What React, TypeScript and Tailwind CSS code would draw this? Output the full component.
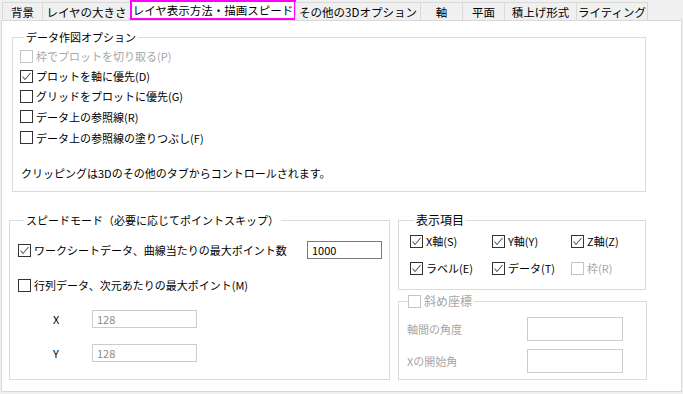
import React from 'react';

const tabs = [
  { id: 1, title: '背景', w: 'w-[41px]' },
  { id: 2, title: 'レイヤの大きさ', w: 'w-[89px]' },
  { id: 3, title: 'レイヤ表示方法・描画スピード', w: 'w-[166px]', active: true },
  { id: 4, title: 'その他の3Dオプション', w: 'w-[126px]' },
  { id: 5, title: '軸', w: 'w-[43px]' },
  { id: 6, title: '平面', w: 'w-[43px]' },
  { id: 7, title: '積上げ形式', w: 'w-[73px]' },
  { id: 8, title: 'ライティング', w: 'w-[72px]' },
];

const Check = ({ checked = false, disabled = false }: { checked?: boolean; disabled?: boolean }) => (
  <span
    className={`flex h-[13px] w-[13px] shrink-0 items-center justify-center border bg-white ${
      disabled ? 'border-[#c4c4c4]' : 'border-[#333333]'
    }`}
  >
    {checked && (
      <svg width="11" height="11" viewBox="0 0 11 11">
        <polyline points="1.5,5.5 4,8.5 9.5,2" fill="none" stroke="#5a5a5a" strokeWidth="1.1" />
      </svg>
    )}
  </span>
);

const CheckRow = ({
  label,
  checked,
  disabled,
  h = 'h-[20px]',
}: {
  label: string;
  checked?: boolean;
  disabled?: boolean;
  h?: string;
}) => (
  <div className={`flex items-center gap-[3px] whitespace-nowrap ${h}`}>
    <Check checked={checked} disabled={disabled} />
    <span className={disabled ? 'text-[#a6a6a6]' : 'text-black'}>{label}</span>
  </div>
);

const App = () => {
  return (
    <div className="h-[394px] w-[683px] overflow-hidden bg-[#f0f0f0] font-['Noto_Sans_CJK_JP',sans-serif] text-[11px] leading-[14px] text-black">
      {/* Tabs */}
      <div className="flex h-[20px] items-end pl-[2px]">
        {tabs.map((tab) =>
          tab.active ? (
            <div
              key={tab.id}
              className={`${tab.w} -ml-px flex h-[20px] items-center justify-center whitespace-nowrap border-2 border-[#ff00ff] bg-white text-[11.5px]`}
            >
              {tab.title}
            </div>
          ) : (
            <div
              key={tab.id}
              className={`${tab.w} -ml-px flex h-[18px] items-center justify-center whitespace-nowrap border-t border-r border-l border-[#d9d9d9] bg-[#f0f0f0] text-[11.5px] first:ml-0`}
            >
              {tab.title}
            </div>
          )
        )}
      </div>

      {/* Panel */}
      <div className="ml-px h-[372px] w-[681px] border border-[#d9d9d9] bg-white">
        {/* データ作図オプション */}
        <fieldset className="ml-[10px] mt-[9px] h-[162px] w-[634px] border border-[#dcdcdc] pl-[7px]">
          <legend className="ml-[4px] px-[2px]">データ作図オプション</legend>
          <div className="mt-[2px] flex flex-col">
            <CheckRow label="枠でプロットを切り取る(P)" disabled />
            <CheckRow label="プロットを軸に優先(D)" checked />
            <CheckRow label="グリッドをプロットに優先(G)" />
            <CheckRow label="データ上の参照線(R)" h="h-[21px]" />
            <CheckRow label="データ上の参照線の塗りつぶし(F)" h="h-[21px]" />
            <div className="mt-[18px] pl-px">クリッピングは3Dのその他のタブからコントロールされます。</div>
          </div>
        </fieldset>

        <div className="mt-[21px] flex">
          {/* スピードモード */}
          <fieldset className="ml-[7px] h-[167px] w-[381px] border border-[#dcdcdc] pl-[8px] pr-[7px]">
            <legend className="ml-[6px] px-[2px]">スピードモード（必要に応じてポイントスキップ）</legend>
            <div className="mt-[13px] flex h-[20px] items-center justify-between">
              <CheckRow label="ワークシートデータ、曲線当たりの最大ポイント数" checked />
              <div className="flex h-[18px] w-[75px] items-center border border-[#7a7a7a] px-[4px]">1000</div>
            </div>
            <div className="mt-[15px]">
              <CheckRow label="行列データ、次元あたりの最大ポイント(M)" />
            </div>
            <div className="mt-[15px] flex h-[18px] items-center pl-[35px]">
              <span className="w-[39px]">X</span>
              <div className="flex h-[18px] w-[105px] items-center border border-[#cccccc] px-[4px] text-[#8c8c8c]">128</div>
            </div>
            <div className="mt-[16px] flex h-[18px] items-center pl-[35px]">
              <span className="w-[39px]">Y</span>
              <div className="flex h-[18px] w-[105px] items-center border border-[#cccccc] px-[4px] text-[#8c8c8c]">128</div>
            </div>
          </fieldset>

          <div className="ml-[8px] flex flex-col">
            {/* 表示項目 */}
            <fieldset className="h-[77px] w-[248px] border border-[#dcdcdc] pl-[11px]">
              <legend className="ml-[4px] px-[2px] text-[12px]">表示項目</legend>
              <div className="mt-[4px] grid grid-cols-[82px_79px_70px] gap-y-[7px]">
                <CheckRow label="X軸(S)" checked />
                <CheckRow label="Y軸(Y)" checked />
                <CheckRow label="Z軸(Z)" checked />
                <CheckRow label="ラベル(E)" checked />
                <CheckRow label="データ(T)" checked />
                <CheckRow label="枠(R)" disabled />
              </div>
            </fieldset>

            {/* 斜め座標 */}
            <fieldset className="mt-[4px] h-[86px] w-[249px] border border-[#dcdcdc] pl-[8px]">
              <legend className="ml-[1px] flex items-center gap-[3px] pr-[2px] text-[#a6a6a6]">
                <Check disabled />
                <span className="text-[12px]">斜め座標</span>
              </legend>
              <div className="mt-[9px] flex h-[24px] items-center text-[#a6a6a6]">
                <span className="w-[120px]">軸間の角度</span>
                <div className="h-[24px] w-[96px] border border-[#cccccc]" />
              </div>
              <div className="mt-[8px] flex h-[24px] items-center text-[#a6a6a6]">
                <span className="w-[120px]">Xの開始角</span>
                <div className="h-[24px] w-[96px] border border-[#cccccc]" />
              </div>
            </fieldset>
          </div>
        </div>
      </div>
    </div>
  );
};

export default App;
